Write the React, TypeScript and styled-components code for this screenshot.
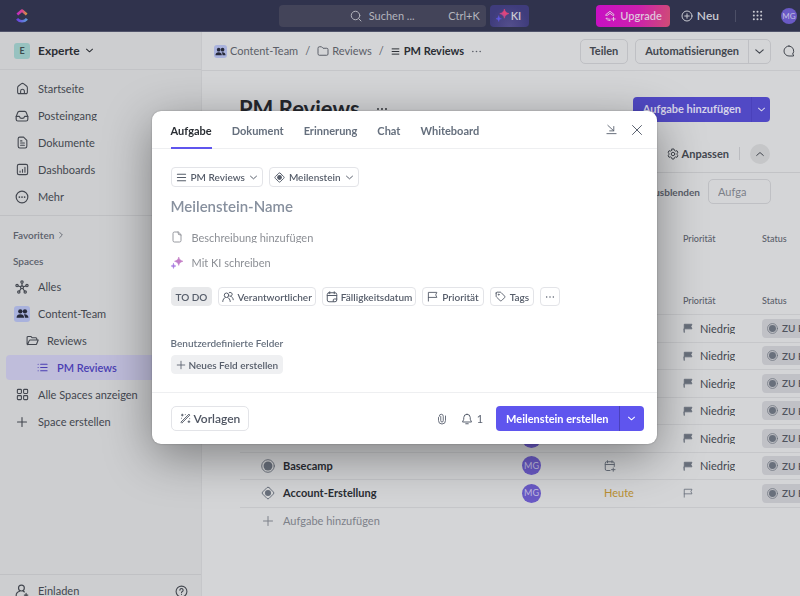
import React from 'react';
import styled, { createGlobalStyle, css } from 'styled-components';

const Global = createGlobalStyle`
  *, *::before, *::after { box-sizing: border-box; }
  html, body { margin: 0; }
  body { font-family: Lato, 'Open Sans', sans-serif; font-size: 11px; line-height: 14px; color: #43474f; overflow: hidden; }
  button, input { font: inherit; color: inherit; margin: 0; }
  button { background: none; border: 0; padding: 0; cursor: pointer; white-space: nowrap; }
  a { color: inherit; text-decoration: none; }
  h1, h2, ul, nav { margin: 0; padding: 0; }
`;

/* ---------- icons ---------- */

const Svg = styled.svg<{ $size: number }>`
  display: block;
  flex: none;
  width: ${p => p.$size}px;
  height: ${p => p.$size}px;
  fill: none;
  stroke: currentColor;
  stroke-linecap: round;
  stroke-linejoin: round;
`;

const shapes: Record<string, React.ReactNode> = {
  home: <><path d="M3 10.5V19a2.5 2.5 0 0 0 2.5 2.5h13A2.5 2.5 0 0 0 21 19v-8.500a4 4 0 0 0-1.600-3.200l-5-3.900a4 4 0 0 0-4.800 0l-5 3.900A4 4 0 0 0 3 10.500z" /><path d="M8.500 21v-4a3.500 3.500 0 0 1 7 0v4" /></>,
  inbox: <><path d="M2 13l2.600-6.800A3 3 0 0 1 7.400 4h9.200a3 3 0 0 1 2.800 2.200L22 13v4.500a3 3 0 0 1-3 3H5a3 3 0 0 1-3-3z" /><path d="M2 12.500h5.500c.5 2.500 2 3.500 4.500 3.500s4-1 4.500-3.500H22" /></>,
  doc: <><path d="M14 2H7a3 3 0 0 0-3 3v14a3 3 0 0 0 3 3h10a3 3 0 0 0 3-3V8z" /><path d="M8.500 9h2.500M8.500 13h7M8.500 17h7" /></>,
  page: <path d="M14 2H7a3 3 0 0 0-3 3v14a3 3 0 0 0 3 3h10a3 3 0 0 0 3-3V8zM14 2l1 5 5 1" />,
  dashboard: <><rect x="2.500" y="2.500" width="19" height="19" rx="3" /><path d="M7.500 17v-2M12 17v-5M16.500 17V8" /></>,
  more: <><circle cx="12" cy="12" r="10" /><path d="M7.500 12h.01M12 12h.01M16.500 12h.01" strokeWidth="3" /></>,
  dots: <path d="M4 12h.01M12 12h.01M20 12h.01" strokeWidth="3.600" />,
  down: <path d="M4 8.500l8 7 8-7" />,
  up: <path d="M4 15.500l8-7 8 7" />,
  right: <path d="M8 4l8 8-8 8" />,
  network: <><circle cx="12" cy="12.500" r="2.500" /><circle cx="12" cy="3.500" r="2" /><circle cx="3.500" cy="9.500" r="2" /><circle cx="20.500" cy="9.500" r="2" /><circle cx="6.500" cy="20.500" r="2" /><circle cx="17.500" cy="20.500" r="2" /><path d="M12 5.500V10M5.400 10.200l4.300 1.400M18.600 10.200l-4.300 1.400M7.700 18.800l2.800-4.200M16.300 18.800l-2.800-4.200" /></>,
  folder: <path d="M2 6a2.500 2.500 0 0 1 2.500-2.500H9l3 3h7.500A2.500 2.500 0 0 1 22 9v9a2.500 2.500 0 0 1-2.500 2.500h-15A2.500 2.500 0 0 1 2 18z" />,
  folderOpen: <path d="M3 19.500l-1-1V6.500a2 2 0 0 1 2-2h5l2.500 2.500H18a2 2 0 0 1 2 2v2M3 19.500h14.500a2.500 2.500 0 0 0 2.300-1.600L22.500 11H7.800a2 2 0 0 0-1.900 1.300z" />,
  list: <path d="M8 5h14M8 12h14M8 19h14M2.500 5h.01M2.500 12h.01M2.500 19h.01" />,
  lines: <path d="M3 5h18M3 12h18M3 19h18" />,
  grid: <><rect x="2.500" y="2.500" width="7.500" height="7.500" rx="1.500" /><rect x="14" y="2.500" width="7.500" height="7.500" rx="1.500" /><rect x="2.500" y="14" width="7.500" height="7.500" rx="1.500" /><rect x="14" y="14" width="7.500" height="7.500" rx="1.500" /></>,
  plus: <path d="M12 3v18M3 12h18" />,
  invite: <><circle cx="11" cy="7" r="5" /><path d="M14 22H4.500A2.500 2.500 0 0 1 2 19.500C2 16 5 13.500 8 12.500M14 12.500l2 1M19 16v6M16 19h6" /></>,
  help: <><circle cx="12" cy="12" r="10" /><path d="M9 9.500a3 3 0 1 1 4.500 2.600c-1 .6-1.500 1-1.500 2.100M12 17.500h.01" /></>,
  search: <><circle cx="11" cy="11" r="8.500" /><path d="M17.500 17.500L22 22" /></>,
  circlePlus: <><circle cx="12" cy="12" r="10" /><path d="M12 7.500v9M7.500 12h9" /></>,
  apps: <path d="M4 4h.01M12 4h.01M20 4h.01M4 12h.01M12 12h.01M20 12h.01M4 20h.01M12 20h.01M20 20h.01" strokeWidth="4.500" />,
  upgrade: <><path d="M4 9l8-6.500L20 9v1.500h-3l-5-4-5 4H4z" /><path d="M12 21c-4 0-7-2-8-4.500h3c1 1.200 2.800 2 5 2M19 14.500v7M15.500 18h7" /></>,
  chat: <path d="M12 2a10 10 0 1 0 0 20h9v-2.500l-2-1A10 10 0 0 0 12 2z" />,
  gear: <><circle cx="12" cy="12" r="3.500" /><path d="M10 2h4l.8 3 2.200 1.200 3-.8 2 3.500-2.200 2.100v2l2.200 2.100-2 3.500-3-.8-2.200 1.200-.8 3h-4l-.8-3L7 17.800l-3 .8-2-3.500L4.200 13v-2L2 8.900l2-3.500 3 .8L9.200 5z" /></>,
  flag: <path d="M3 22V3h18.500l-2.500 5.500 2.500 5.500H3" />,
  flagFull: <path d="M3 22V3h18.500l-2.500 5.500 2.500 5.500H3z" fill="currentColor" />,
  tag: <><path d="M2.500 4.500v6.700a3 3 0 0 0 .9 2.100l7.600 7.500a2.500 2.500 0 0 0 3.600 0l6.200-6.200a2.500 2.500 0 0 0 0-3.600l-7.500-7.600a3 3 0 0 0-2.100-.9H4.500a2 2 0 0 0-2 2z" /><circle cx="8" cy="8" r="1" /></>,
  calendar: <><rect x="2.500" y="3.500" width="19" height="18" rx="3.500" /><path d="M2.500 9h19M7.500 1.500v4M16.500 1.500v4M14.500 21v-3a2 2 0 0 1 2-2h5" /></>,
  calendarPlus: <><path d="M12 21H5.500a3 3 0 0 1-3-3V6.500a3 3 0 0 1 3-3h12a3 3 0 0 1 3 3V13M2.500 9h18M7 1.500v4M16 1.500v4M18.500 16v6.500M15 19.300h7" /></>,
  people: <><circle cx="9" cy="8.500" r="4.500" /><path d="M1.500 21c0-4.500 3-7 5-8M16.500 21c0-4.500-3-7-5-8M14.500 3.200a4 4 0 1 1 1.500 7.500M17.500 10.500c2.500 1 5 3.500 5 7" /></>,
  team: <g fill="currentColor" stroke="none"><circle cx="8" cy="8" r="4" /><circle cx="16.500" cy="8" r="4" /><path d="M1 20c0-4.500 3-6.500 7-6.500s7 2 7 6.500zM16.500 20c0-2.800-.8-4.800-2-6.300 4.500-.8 8.500 1.300 8.500 6.300z" /></g>,
  dock: <path d="M4 3l13 12M17 5.500V15H8M2 21h20" />,
  close: <path d="M3 3l18 18M21 3L3 21" />,
  bell: <path d="M12 2.500a6.500 6.500 0 0 0-6.500 6.500v3.500L3 18h18l-2.500-5.500V9A6.500 6.500 0 0 0 12 2.500zM9.500 21.500h5" />,
  clip: <path d="M9.500 7v8.500a2.500 2.500 0 0 0 5 0V6.500a4 4 0 0 0-8 0M5 9v6a7 7 0 0 0 14 0V6" />,
  wand: <path d="M2.500 19.500L19.500 2.500l2 2L4.500 21.500zM3 4.500h4M5 2.500v4M11.500 3.500h.01M3.500 11.500h.01M21 12.500v.01M17.500 19h4M19.500 17v4" />,
  milestone: <><rect x="4.200" y="4.200" width="15.600" height="15.600" rx="2.500" transform="rotate(45 12 12)" /><circle cx="12" cy="12" r="5.200" fill="currentColor" stroke="none" /></>,
  target: <><circle cx="12" cy="12" r="10.800" /><circle cx="12" cy="12" r="7.600" fill="currentColor" stroke="none" /></>,
};

const Icon = ({ name, size = 12, weight = 2 }: { name: string; size?: number; weight?: number }) => (
  <Svg $size={size} viewBox="0 0 24 24" strokeWidth={weight} aria-hidden="true">{shapes[name]}</Svg>
);

const Logo = () => (
  <Svg $size={14} viewBox="0 0 24 24" strokeWidth="4.600" aria-hidden="true">
    <defs>
      <linearGradient id="logoTop"><stop stopColor="#c02bc4" /><stop offset=".55" stopColor="#d8488a" /><stop offset="1" stopColor="#d39a3c" /></linearGradient>
      <linearGradient id="logoLow"><stop stopColor="#6a3fe0" /><stop offset="1" stopColor="#5d9bd8" /></linearGradient>
    </defs>
    <path d="M4 9.500l8-6.800 8 6.800" stroke="url(#logoTop)" strokeLinecap="butt" />
    <path d="M3.500 17c4.500 5.300 12.500 5.300 17 0" stroke="url(#logoLow)" strokeLinecap="butt" />
  </Svg>
);

const Sparkle = ({ id, size, from, to }: { id: string; size: number; from: string; to: string }) => (
  <Svg $size={size} viewBox="0 0 24 24" strokeWidth="0" aria-hidden="true">
    <defs><linearGradient id={id} x1="0" y1="1" x2="1" y2="0"><stop stopColor={from} /><stop offset=".5" stopColor={to} /></linearGradient></defs>
    <path d="M15.500 0c1 4.800 3.200 7 8.500 8.500-5.300 1.500-7.500 3.700-8.500 8.500-1-4.800-3.200-7-8.500-8.500C12.300 7 14.500 4.800 15.500 0z" fill={`url(#${id})`} stroke={to} strokeWidth="1" />
    <path d="M5 13c.6 3.200 1.800 4.400 5 5-3.200.6-4.400 1.800-5 5-.6-3.200-1.800-4.400-5-5 3.200-.6 4.400-1.800 5-5z" fill={from} stroke={from} strokeWidth="1" />
  </Svg>
);

/* ---------- top bar ---------- */

const Page = styled.div`
  height: 100vh;
  display: flex;
  flex-direction: column;
  overflow: hidden;
  background: #d4d5d7;
`;

const TopBar = styled.header`
  flex: none;
  height: 32px;
  display: grid;
  grid-template-columns: 1fr auto 1fr;
  align-items: center;
  padding-left: 8px;
  background: #30334d;
  border-bottom: 1px solid #50536a;
  color: #c9cad2;
`;

const LogoLink = styled.a`
  justify-self: start;
  padding-left: 7px;
`;

const Cluster = styled.div<{ $gap: number }>`
  display: flex;
  align-items: center;
  gap: ${p => p.$gap}px;
`;

const SearchButton = styled.button`
  width: 207px;
  height: 22px;
  display: flex;
  align-items: center;
  gap: 7px;
  padding: 0 6px 0 71px;
  border-radius: 4px;
  background: #434459;
  color: #b3b4bd;
  font-size: 11px;
`;

const Shortcut = styled.kbd`
  margin-left: auto;
  font: inherit;
`;

const AiButton = styled.button`
  height: 22px;
  display: flex;
  align-items: center;
  gap: 2px;
  padding: 0 8px 0 6px;
  border-radius: 4px;
  background: radial-gradient(ellipse at 50% 100%, #544f8c, #3f3c7c 70%);
  font-weight: 600;
`;

const TopActions = styled.div`
  display: flex;
  justify-content: flex-end;
  align-items: center;
  padding-right: 3px;
`;

const UpgradeButton = styled.button`
  height: 22px;
  display: flex;
  align-items: center;
  gap: 4px;
  padding: 0 8px;
  margin-right: 11px;
  border-radius: 4px;
  background: linear-gradient(100deg, #c80fc4, #cb1fae 55%, #cf4d74);
  color: #dfc4dc;
  font-weight: 600;
`;

const NewButton = styled.button`
  display: flex;
  align-items: center;
  gap: 4px;
  font-size: 12px;
  font-weight: 600;
`;

const TopDivider = styled.span`
  width: 1px;
  height: 12px;
  margin: 0 16px;
  background: #4c4f66;
`;

const AppsButton = styled.button`
  margin-right: 18px;
`;

const Avatar = styled.span<{ $size: number }>`
  display: flex;
  flex: none;
  align-items: center;
  justify-content: center;
  width: ${p => p.$size}px;
  height: ${p => p.$size}px;
  border-radius: 50%;
  background: #6a5ac6;
  color: #c3bfe0;
  font-size: ${p => (p.$size > 16 ? 9 : 8)}px;
  line-height: 10px;
`;

/* ---------- sidebar ---------- */

const Body = styled.div`
  flex: 1;
  min-height: 0;
  display: flex;
`;

const Sidebar = styled.aside`
  flex: none;
  width: 202px;
  display: flex;
  flex-direction: column;
  background: #cdced0;
  border-right: 1px solid #c6c7ca;
`;

const Workspace = styled.button`
  flex: none;
  height: 38px;
  display: flex;
  align-items: center;
  gap: 8px;
  padding-left: 14px;
  border-bottom: 1px solid #c2c3c6;
  color: #2a2d33;
  font-size: 12px;
  font-weight: 700;
`;

const WorkspaceName = styled.span`
  display: flex;
  align-items: center;
  gap: 5px;
`;

const Tile = styled.span<{ $tone: 'teal' | 'blue'; $size: number }>`
  display: flex;
  flex: none;
  align-items: center;
  justify-content: center;
  width: ${p => p.$size}px;
  height: ${p => p.$size}px;
  border-radius: 3px;
  background: ${p => (p.$tone === 'teal' ? '#97c2c0' : '#a9b2dd')};
  color: ${p => (p.$tone === 'teal' ? '#3c4a4d' : '#26293a')};
  font-size: 9px;
`;

const NavGroup = styled.nav`
  padding: 5px 6px 4px;
  & + & { border-top: 1px solid #bfc0c3; }
`;

const NavItem = styled.a<{ $level?: number; $active?: boolean }>`
  display: flex;
  align-items: center;
  gap: ${p => (p.$level ? 8 : 9)}px;
  height: 25px;
  margin: 1px 0 2px;
  padding-left: ${p => 9 + 10 * (p.$level || 0)}px;
  border-radius: 4px;
  white-space: nowrap;
  & + & { margin-top: 0; }
  ${p => p.$active && css`
    background: #bfbddb;
    color: #4a3db3;
    font-weight: 600;
  `}
`;

const IconSlot = styled.span`
  width: 14px;
  flex: none;
  display: flex;
  justify-content: center;
`;

const NavHeading = styled.h2<{ $height: number }>`
  display: flex;
  align-items: center;
  gap: 3px;
  height: ${p => p.$height}px;
  padding-left: 7px;
  color: #5b606b;
  font-size: 10px;
  font-weight: 600;
`;

const TightText = styled.span`
  height: 11px;
  line-height: 11px;
  overflow: hidden;
`;

const SideFooter = styled.div`
  flex: none;
  height: 34px;
  margin: auto 0 -12px;
  display: flex;
  align-items: center;
  justify-content: space-between;
  padding: 0 13px 0 6px;
  border-top: 1px solid #c0c1c4;
`;

/* ---------- main area ---------- */

const Main = styled.main`
  flex: 1;
  min-width: 0;
  overflow: hidden;
`;

const CrumbBar = styled.div`
  height: 39px;
  display: flex;
  align-items: center;
  padding: 0 5px 0 12px;
  border-bottom: 1px solid #c6c7ca;
`;

const Crumbs = styled.nav`
  flex: 1;
  display: flex;
  align-items: center;
  gap: 7px;
  color: #5b5f68;
  white-space: nowrap;
`;

const Crumb = styled.a<{ $current?: boolean }>`
  display: flex;
  align-items: center;
  gap: ${p => (p.$current ? 4 : 3)}px;
  ${p => p.$current && css`color: #2a2d33; font-weight: 700;`}
`;

const ShareGroup = styled.div`
  display: flex;
  gap: 7px;
  margin-right: 12px;
`;

const Outline = styled.div`
  display: flex;
  height: 25px;
  border: 1px solid #bfc0c4;
  border-radius: 5px;
  color: #43474f;
  font-weight: 700;
`;

const OutlineButton = styled.button`
  display: flex;
  align-items: center;
  padding: 0 9px;
  & + & { border-left: 1px solid #bfc0c4; padding: 0 5px; }
`;

const TitleRow = styled.div`
  height: 62px;
  display: flex;
  align-items: center;
  gap: 16px;
  padding: 14px 30px 0 37px;
  color: #25282e;
`;

const Title = styled.h1`
  font-size: 22px;
  line-height: 26px;
  font-weight: 700;
`;

const Split = styled.div<{ $muted?: boolean }>`
  display: flex;
  height: 25px;
  border-radius: 4px;
  overflow: hidden;
  background: ${p => (p.$muted ? '#5149c5' : '#5f55ee')};
  color: ${p => (p.$muted ? '#d6d4ea' : '#ffffff')};
  font-weight: 700;
`;

const PageSplit = styled(Split)`
  margin-left: auto;
`;

const SplitMain = styled.button`
  padding: 0 10px;
`;

const SplitMenu = styled.button<{ $wide?: boolean }>`
  display: flex;
  align-items: center;
  justify-content: center;
  width: ${p => (p.$wide ? 25 : 19)}px;
  border-left: 1px solid #4a41bb;
`;

const ViewBar = styled.div`
  height: 40px;
  display: flex;
  align-items: center;
  justify-content: flex-end;
  padding: 2px 30px 0 0;
  border-bottom: 1px solid #c2c3c6;
`;

const TextButton = styled.button`
  display: flex;
  align-items: center;
  gap: 3px;
  font-weight: 700;
`;

const ViewDivider = styled.span`
  width: 1px;
  height: 13px;
  margin: 0 10px;
  background: #bbbcc0;
`;

const RoundButton = styled.button`
  width: 20px;
  height: 20px;
  display: flex;
  align-items: center;
  justify-content: center;
  border-radius: 50%;
  background: #c5c6c8;
`;

const FilterBar = styled.div`
  height: 37px;
  display: flex;
  align-items: center;
  justify-content: flex-end;
  gap: 8px;
  padding-right: 29px;
  color: #5b606b;
  font-size: 10px;
  font-weight: 700;
`;

const FilterInput = styled.input`
  width: 63px;
  height: 25px;
  padding: 0 9px;
  border: 1px solid #bfc0c4;
  border-radius: 5px;
  background: transparent;
  font-size: 11px;
  font-weight: 400;
  &::placeholder { color: #7c8089; opacity: 1; }
`;

const Lists = styled.div`
  padding: 16px 0 0 38px;
`;

const Table = styled.table`
  min-width: 640px;
  width: 100%;
  table-layout: fixed;
  border-collapse: collapse;
  & + & { margin-top: 36px; }
`;

const Col = styled.col<{ $width?: number }>`
  ${p => p.$width && css`width: ${p.$width}px;`}
`;

const Th = styled.th`
  height: 26px;
  padding: 0;
  text-align: left;
  color: #5b606b;
  font-size: 9px;
  font-weight: 500;
`;

const Rows = styled.tbody`
  tr { border-top: 1px solid #c6c7ca; }
  tr:last-child { border-bottom: 1px solid #c6c7ca; }
  tr:nth-child(odd) td { height: 28px; }
`;

const Td = styled.td`
  height: 27px;
  padding: 0;
  white-space: nowrap;
`;

const Cell = styled.div<{ $gap?: number; $indent?: number }>`
  display: flex;
  align-items: center;
  gap: ${p => p.$gap || 0}px;
  padding-left: ${p => p.$indent || 0}px;
  color: #69707c;
`;

const TaskName = styled.span`
  color: #2a2d33;
  font-weight: 700;
`;

const Due = styled.span`
  color: #b98f33;
`;

const Level = styled(TightText)`
  color: #43474f;
`;

const StatusBadge = styled.span`
  width: 96px;
  height: 19px;
  display: flex;
  align-items: center;
  gap: 4px;
  padding-left: 5px;
  border-radius: 4px;
  background: #c0c1c6;
  color: #69707c;
`;

const StatusName = styled.span`
  color: #50545e;
  font-size: 10px;
  font-weight: 600;
`;

const AddRow = styled.button`
  height: 27px;
  display: flex;
  align-items: center;
  gap: 9px;
  padding-left: 22px;
  color: #7c8089;
`;

/* ---------- dialog ---------- */

const Backdrop = styled.div`
  position: fixed;
  inset: 0;
  display: flex;
  justify-content: center;
  align-items: flex-start;
  padding: 111px 0 0 8px;
`;

const Dialog = styled.section`
  width: 505px;
  max-width: 100%;
  border-radius: 9px;
  background: #ffffff;
  box-shadow: 0 12px 48px rgba(0, 0, 0, 0.4), 0 0 2px rgba(0, 0, 0, 0.3);
  color: #5b6270;
`;

const DialogHead = styled.div`
  height: 38px;
  display: flex;
  justify-content: space-between;
  padding: 0 14px 0 19px;
  border-bottom: 1px solid #eeeff1;
`;

const Tabs = styled.div`
  display: flex;
  gap: 20px;
`;

const Tab = styled.button<{ $active?: boolean }>`
  height: 38px;
  padding-top: 3px;
  border-bottom: 2px solid ${p => (p.$active ? '#5f55ee' : 'transparent')};
  color: ${p => (p.$active ? '#2a2e34' : '#656f7d')};
  font-weight: 700;
`;

const DialogBody = styled.div`
  padding: 18px 19px;
`;

const ChipRow = styled.div<{ $top?: number }>`
  display: flex;
  gap: 6px;
  margin-top: ${p => p.$top || 0}px;
`;

const Chip = styled.button<{ $tall?: boolean; $pad?: number }>`
  height: ${p => (p.$tall ? 20 : 19)}px;
  display: flex;
  align-items: center;
  gap: ${p => (p.$pad || 3)}px;
  padding: 0 ${p => (p.$pad || 3)}px;
  border: 1px solid #e3e4e8;
  border-radius: 4px;
  background: #ffffff;
  color: #565d6a;
  font-size: 10px;
  font-weight: 600;
`;

const FieldChip = styled(Chip)`
  gap: 3px;
  background: #eff0f2;
  border-color: #eff0f2;
`;

const StatusChip = styled(Chip)`
  background: #e8e9eb;
  border-color: #e8e9eb;
`;

const NameInput = styled.input`
  display: block;
  width: 100%;
  height: 22px;
  margin-top: 8px;
  padding: 0;
  border: 0;
  outline: 0;
  background: transparent;
  font-size: 15px;
  font-weight: 600;
  color: #2a2e34;
  &::placeholder { color: #87909e; opacity: 1; }
`;

const PromptButton = styled.button<{ $top: number }>`
  height: 20px;
  display: flex;
  align-items: center;
  gap: 9px;
  margin-top: ${p => p.$top}px;
  color: #8c8f95;
`;

const FieldHeading = styled.h2`
  margin: 30px 0 5px;
  font-size: 10px;
  line-height: 14px;
  font-weight: 600;
  color: #656f7d;
`;

const DialogFoot = styled.div`
  height: 52px;
  display: flex;
  align-items: center;
  justify-content: space-between;
  padding: 0 13px 0 19px;
  border-top: 1px solid #eeeff1;
`;

const TemplateButton = styled.button`
  height: 25px;
  display: flex;
  align-items: center;
  gap: 3px;
  padding: 0 8px;
  border: 1px solid #e3e4e8;
  border-radius: 5px;
  font-size: 12px;
  font-weight: 600;
  color: #4f5562;
`;

const IconButton = styled.button`
  display: flex;
  align-items: center;
  gap: 4px;
`;

const tasks: { name?: string; kind: string; due?: string; level?: string }[] = [
  { kind: 'target', level: 'Niedrig' },
  { kind: 'target', level: 'Niedrig' },
  { kind: 'target', level: 'Niedrig' },
  { kind: 'target', level: 'Niedrig' },
  { kind: 'target', level: 'Niedrig' },
  { name: 'Basecamp', kind: 'target', level: 'Niedrig' },
  { name: 'Account-Erstellung', kind: 'milestone', due: 'Heute' },
];

const Columns = () => (
  <colgroup><Col /><Col $width={82} /><Col $width={79} /><Col $width={79} /><Col $width={118} /></colgroup>
);

const HeadRow = () => (
  <thead><tr><Th /><Th /><Th /><Th scope="col">Priorität</Th><Th scope="col">Status</Th></tr></thead>
);

export default function App() {
  return (
    <>
      <Global />
      <Page>
        <TopBar>
          <LogoLink href="#" aria-label="Start"><Logo /></LogoLink>
          <Cluster $gap={4}>
            <SearchButton><Icon name="search" />Suchen ...<Shortcut>Ctrl+K</Shortcut></SearchButton>
            <AiButton><Sparkle id="aiTop" size={13} from="#5f58e0" to="#e0457a" />KI</AiButton>
          </Cluster>
          <TopActions>
            <UpgradeButton><Icon name="upgrade" />Upgrade</UpgradeButton>
            <NewButton><Icon name="circlePlus" />Neu</NewButton>
            <TopDivider />
            <AppsButton aria-label="Apps"><Icon name="apps" size={11} /></AppsButton>
            <Avatar $size={16}>MG</Avatar>
          </TopActions>
        </TopBar>

        <Body>
          <Sidebar>
            <Workspace><Tile $tone="teal" $size={16}>E</Tile><WorkspaceName>Experte<Icon name="down" size={9} weight={2.8} /></WorkspaceName></Workspace>
            <NavGroup aria-label="Hauptmenü">
              <NavItem href="#"><IconSlot><Icon name="home" size={13} /></IconSlot>Startseite</NavItem>
              <NavItem href="#"><IconSlot><Icon name="inbox" size={14} /></IconSlot><TightText>Posteingang</TightText></NavItem>
              <NavItem href="#"><IconSlot><Icon name="doc" size={13} /></IconSlot>Dokumente</NavItem>
              <NavItem href="#"><IconSlot><Icon name="dashboard" size={13} /></IconSlot>Dashboards</NavItem>
              <NavItem href="#"><IconSlot><Icon name="more" size={14} /></IconSlot>Mehr</NavItem>
            </NavGroup>
            <NavGroup aria-label="Spaces">
              <NavHeading $height={27}>Favoriten<Icon name="right" size={8} weight={2.6} /></NavHeading>
              <NavHeading $height={25}>Spaces</NavHeading>
              <NavItem href="#"><IconSlot><Icon name="network" size={14} /></IconSlot>Alles</NavItem>
              <NavItem href="#"><IconSlot><Tile $tone="blue" $size={16}><Icon name="team" size={13} /></Tile></IconSlot>Content-Team</NavItem>
              <NavItem href="#" $level={1}><IconSlot><Icon name="folderOpen" size={13} /></IconSlot>Reviews</NavItem>
              <NavItem href="#" $level={2} $active><IconSlot><Icon name="list" size={11} weight={2.4} /></IconSlot>PM Reviews</NavItem>
              <NavItem href="#"><IconSlot><Icon name="grid" size={13} /></IconSlot>Alle Spaces anzeigen</NavItem>
              <NavItem href="#"><IconSlot><Icon name="plus" size={12} weight={2.2} /></IconSlot>Space erstellen</NavItem>
            </NavGroup>
            <SideFooter>
              <NavItem href="#"><IconSlot><Icon name="invite" size={14} /></IconSlot>Einladen</NavItem>
              <IconButton aria-label="Hilfe"><Icon name="help" size={13} /></IconButton>
            </SideFooter>
          </Sidebar>

          <Main>
            <CrumbBar>
              <Crumbs aria-label="Pfad">
                <Crumb href="#"><Tile $tone="blue" $size={13}><Icon name="team" size={11} /></Tile>Content-Team</Crumb>
                <span>/</span>
                <Crumb href="#"><Icon name="folder" />Reviews</Crumb>
                <span>/</span>
                <Crumb href="#" $current><Icon name="lines" size={9} weight={2.6} />PM Reviews</Crumb>
                <IconButton aria-label="Mehr"><Icon name="dots" size={11} /></IconButton>
              </Crumbs>
              <ShareGroup>
                <Outline><OutlineButton>Teilen</OutlineButton></Outline>
                <Outline>
                  <OutlineButton>Automatisierungen</OutlineButton>
                  <OutlineButton aria-label="Automatisierungen öffnen"><Icon name="down" size={11} weight={2.6} /></OutlineButton>
                </Outline>
              </ShareGroup>
              <IconButton aria-label="Kommentare"><Icon name="chat" size={12} /></IconButton>
            </CrumbBar>

            <TitleRow>
              <Title>PM Reviews</Title>
              <IconButton aria-label="Listenmenü"><Icon name="dots" size={12} /></IconButton>
              <PageSplit $muted>
                <SplitMain>Aufgabe hinzufügen</SplitMain>
                <SplitMenu aria-label="Weitere Optionen"><Icon name="down" size={9} weight={2.8} /></SplitMenu>
              </PageSplit>
            </TitleRow>

            <ViewBar>
              <TextButton><Icon name="gear" />Anpassen</TextButton>
              <ViewDivider />
              <RoundButton aria-label="Einklappen"><Icon name="up" size={10} weight={2.4} /></RoundButton>
            </ViewBar>

            <FilterBar>
              <button>ausblenden</button>
              <FilterInput aria-label="Aufgaben filtern" placeholder="Aufga" />
            </FilterBar>

            <Lists>
              <Table><Columns /><HeadRow /></Table>
              <Table>
                <Columns />
                <HeadRow />
                <Rows>
                  {tasks.map((t, i) => (
                    <tr key={i}>
                      <Td>{t.name && <Cell $gap={8} $indent={21}><Icon name={t.kind} size={14} weight={1.6} /><TaskName>{t.name}</TaskName></Cell>}</Td>
                      <Td><Avatar $size={19}>MG</Avatar></Td>
                      <Td>{t.due ? <Due>{t.due}</Due> : <Cell><Icon name="calendarPlus" size={12} /></Cell>}</Td>
                      <Td><Cell $gap={7}><Icon name={t.level ? 'flagFull' : 'flag'} size={10} />{t.level && <Level>{t.level}</Level>}</Cell></Td>
                      <Td><StatusBadge><Icon name="target" size={11} weight={1.6} /><StatusName>ZU ERLEDIGEN</StatusName></StatusBadge></Td>
                    </tr>
                  ))}
                </Rows>
              </Table>
              <AddRow><Icon name="plus" size={12} />Aufgabe hinzufügen</AddRow>
            </Lists>
          </Main>
        </Body>
      </Page>

      <Backdrop>
        <Dialog role="dialog" aria-modal="true" aria-label="Aufgabe erstellen">
          <DialogHead>
            <Tabs role="tablist">
              {['Aufgabe', 'Dokument', 'Erinnerung', 'Chat', 'Whiteboard'].map((t, i) => (
                <Tab key={t} role="tab" aria-selected={i === 0} $active={i === 0}>{t}</Tab>
              ))}
            </Tabs>
            <Cluster $gap={14}>
              <IconButton aria-label="Minimieren"><Icon name="dock" size={11} /></IconButton>
              <IconButton aria-label="Schließen"><Icon name="close" size={12} weight={2} /></IconButton>
            </Cluster>
          </DialogHead>

          <DialogBody>
            <ChipRow>
              <Chip $tall $pad={4}><Icon name="lines" size={11} weight={2.2} />PM Reviews<Icon name="down" size={9} weight={2.6} /></Chip>
              <Chip $tall $pad={4}><Icon name="milestone" size={11} />Meilenstein<Icon name="down" size={9} weight={2.6} /></Chip>
            </ChipRow>
            <NameInput aria-label="Meilenstein-Name" placeholder="Meilenstein-Name" />
            <PromptButton $top={10}><Icon name="page" size={12} weight={1.8} /><TightText>Beschreibung hinzufügen</TightText></PromptButton>
            <PromptButton $top={6}><Sparkle id="aiWrite" size={12} from="#a77be0" to="#c47fc6" />Mit KI schreiben</PromptButton>
            <ChipRow $top={14}>
              <StatusChip $pad={4}>TO DO</StatusChip>
              <Chip><Icon name="people" size={12} />Verantwortlicher</Chip>
              <Chip><Icon name="calendar" size={12} />Fälligkeitsdatum</Chip>
              <Chip $pad={4}><Icon name="flag" size={11} />Priorität</Chip>
              <Chip $pad={4}><Icon name="tag" size={11} />Tags</Chip>
              <Chip $pad={4} aria-label="Mehr Felder"><Icon name="dots" size={10} /></Chip>
            </ChipRow>
            <FieldHeading>Benutzerdefinierte Felder</FieldHeading>
            <FieldChip $pad={4}><Icon name="plus" size={10} />Neues Feld erstellen</FieldChip>
          </DialogBody>

          <DialogFoot>
            <TemplateButton><Icon name="wand" size={11} />Vorlagen</TemplateButton>
            <Cluster $gap={13}>
              <IconButton aria-label="Anhang"><Icon name="clip" size={12} weight={1.8} /></IconButton>
              <IconButton aria-label="1 Beobachter"><Icon name="bell" size={12} />1</IconButton>
              <Split>
                <SplitMain>Meilenstein erstellen</SplitMain>
                <SplitMenu $wide aria-label="Weitere Optionen"><Icon name="down" size={9} weight={2.8} /></SplitMenu>
              </Split>
            </Cluster>
          </DialogFoot>
        </Dialog>
      </Backdrop>
    </>
  );
}
